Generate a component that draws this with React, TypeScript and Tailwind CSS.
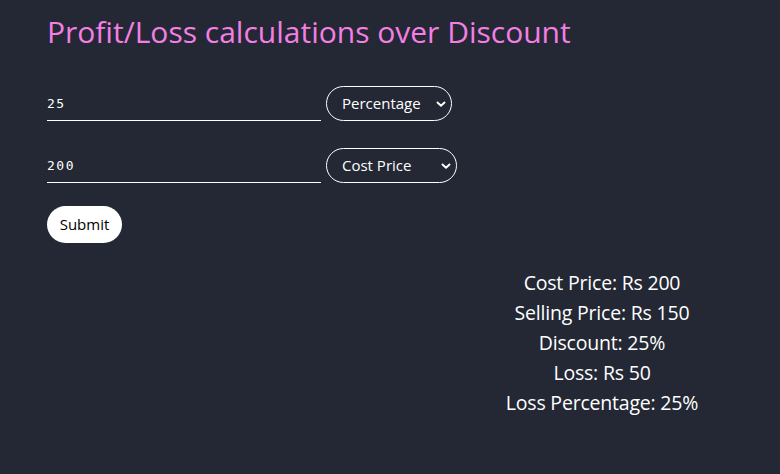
import React from "react";

function Chevron() {
  return (
    <svg width="10" height="10" viewBox="0 0 10 10" className="absolute right-[5px] top-1/2 -translate-y-1/2 pointer-events-none">
      <path d="M1.5 3.5 L5 6.8 L8.5 3.5" fill="none" stroke="white" strokeWidth="1.9" strokeLinecap="round" strokeLinejoin="round" />
    </svg>
  );
}

function Row({ value, label, w }: { value: string; label: string; w: string }) {
  return (
    <div className="flex items-end gap-[5px]">
      <div className="w-[274px] h-[35px] border-b border-white flex items-center pt-[2px]">
        <span className="text-white text-[13px] tracking-[1.5px]" style={{ fontFamily: '"DejaVu Sans Mono", monospace' }}>{value}</span>
      </div>
      <div className={`relative h-[35px] ${w} rounded-full border border-white flex items-center pl-[15px]`}>
        <span className="text-white text-[15px]">{label}</span>
        <Chevron />
      </div>
    </div>
  );
}

export default function App() {
  return (
    <div className="min-h-[474px] w-[780px] bg-[#232834] pl-[47px] pt-[12px]" style={{ fontFamily: '"Open Sans", sans-serif' }}>
      <h1 className="text-[30px] leading-[40px] text-[#f47fe4]">Profit/Loss calculations over Discount</h1>
      <div className="mt-[34px] flex flex-col gap-[27px]">
        <Row value="25" label="Percentage" w="w-[126px]" />
        <Row value="200" label="Cost Price" w="w-[131px]" />
      </div>
      <button className="mt-[23px] h-[37px] w-[75px] rounded-full bg-white text-[15px] text-black">Submit</button>
      <div className="ml-[377px] w-[356px] mt-[25px] text-center text-white text-[19.5px] leading-[30px] tracking-[-0.2px]">
        <div>Cost Price: Rs 200</div>
        <div>Selling Price: Rs 150</div>
        <div>Discount: 25%</div>
        <div>Loss: Rs 50</div>
        <div>Loss Percentage: 25%</div>
      </div>
    </div>
  );
}
